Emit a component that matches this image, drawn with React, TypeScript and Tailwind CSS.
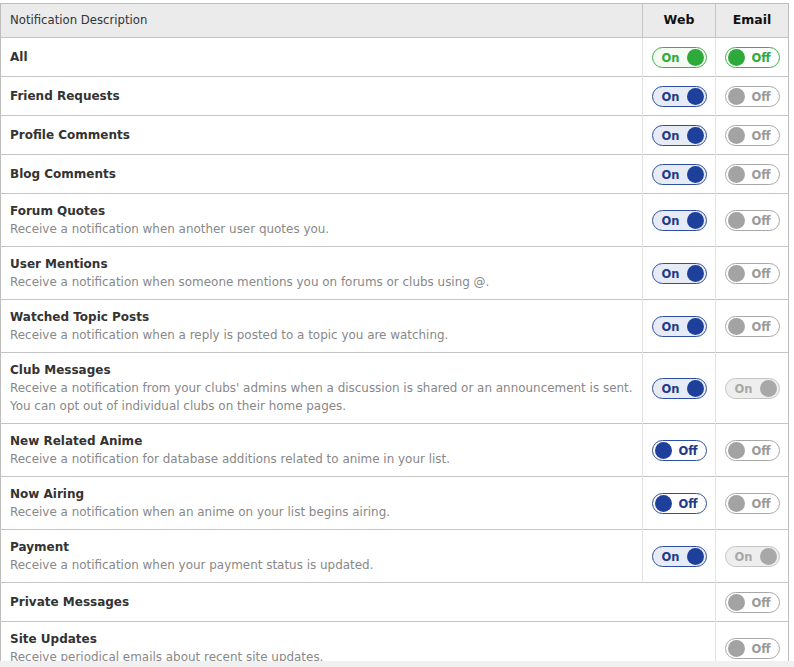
import React from 'react'

type Mode = 'green-on' | 'green-off' | 'blue-on' | 'blue-off' | 'gray-off' | 'gray-on'

interface Row {
  title: string
  desc?: string[]
  web?: Mode
  email: Mode
}

const rows: Row[] = [
  { title: 'All', web: 'green-on', email: 'green-off' },
  { title: 'Friend Requests', web: 'blue-on', email: 'gray-off' },
  { title: 'Profile Comments', web: 'blue-on', email: 'gray-off' },
  { title: 'Blog Comments', web: 'blue-on', email: 'gray-off' },
  { title: 'Forum Quotes', desc: ['Receive a notification when another user quotes you.'], web: 'blue-on', email: 'gray-off' },
  { title: 'User Mentions', desc: ['Receive a notification when someone mentions you on forums or clubs using @.'], web: 'blue-on', email: 'gray-off' },
  { title: 'Watched Topic Posts', desc: ['Receive a notification when a reply is posted to a topic you are watching.'], web: 'blue-on', email: 'gray-off' },
  {
    title: 'Club Messages',
    desc: [
      "Receive a notification from your clubs' admins when a discussion is shared or an announcement is sent.",
      'You can opt out of individual clubs on their home pages.',
    ],
    web: 'blue-on',
    email: 'gray-on',
  },
  { title: 'New Related Anime', desc: ['Receive a notification for database additions related to anime in your list.'], web: 'blue-off', email: 'gray-off' },
  { title: 'Now Airing', desc: ['Receive a notification when an anime on your list begins airing.'], web: 'blue-off', email: 'gray-off' },
  { title: 'Payment', desc: ['Receive a notification when your payment status is updated.'], web: 'blue-on', email: 'gray-on' },
  { title: 'Private Messages', email: 'gray-off' },
  { title: 'Site Updates', desc: ['Receive periodical emails about recent site updates.'], email: 'gray-off' },
]

const styles: Record<Mode, { box: string; knob: string; text: string; on: boolean }> = {
  'green-on': { box: 'border-[#3fae49] bg-[#f3fbf3]', knob: 'bg-[#2eaa3a]', text: 'text-[#2eaa3a]', on: true },
  'green-off': { box: 'border-[#3fae49] bg-white', knob: 'bg-[#2eaa3a]', text: 'text-[#2eaa3a]', on: false },
  'blue-on': { box: 'border-[#2e4e9e] bg-[#e6ebf6]', knob: 'bg-[#1f409a]', text: 'text-[#1f3b88]', on: true },
  'blue-off': { box: 'border-[#2e4e9e] bg-white', knob: 'bg-[#1f409a]', text: 'text-[#1f3b88]', on: false },
  'gray-off': { box: 'border-[#a8a8a8] bg-white', knob: 'bg-[#a3a3a3]', text: 'text-[#9a9a9a]', on: false },
  'gray-on': { box: 'border-[#c4c4c4] bg-[#eeeeee]', knob: 'bg-[#a8a8a8]', text: 'text-[#a8a8a8]', on: true },
}

function Toggle({ mode }: { mode: Mode }) {
  const s = styles[mode]
  return (
    <div className={`mx-auto flex h-[21px] w-[55px] items-center rounded-full border ${s.box} ${s.on ? 'pl-[9px] pr-[2px]' : 'pl-[2px] pr-[8px]'}`}>
      {s.on ? (
        <>
          <span className={`flex-1 translate-y-[1px] text-[11.5px] font-bold leading-[14px] ${s.text}`}>On</span>
          <span className={`h-[17px] w-[17px] rounded-full ${s.knob}`} />
        </>
      ) : (
        <>
          <span className={`h-[17px] w-[17px] rounded-full ${s.knob}`} />
          <span className={`flex-1 translate-y-[1px] text-right text-[11.5px] font-bold leading-[14px] ${s.text}`}>Off</span>
        </>
      )}
    </div>
  )
}

export default function App() {
  return (
    <div className="flex h-[667px] w-[794px] flex-col overflow-hidden bg-white" style={{ fontFamily: '"DejaVu Sans", Verdana, sans-serif' }}>
      <div className="h-[661px] overflow-hidden pt-[3px]">
        <table className="w-[789px] border-collapse border border-[#bdbdbd] text-[12px]">
          <thead>
            <tr className="h-[34px] bg-[#ebebeb]">
              <th className="border-r border-b border-[#c4c4c4] pl-[9px] text-left text-[11.7px] font-normal text-[#333]">Notification Description</th>
              <th className="w-[73px] border-r border-b border-[#c4c4c4] text-center text-[12.5px] font-bold text-[#111]">Web</th>
              <th className="w-[73px] border-b border-[#c4c4c4] text-center text-[12.5px] font-bold text-[#111]">Email</th>
            </tr>
          </thead>
          <tbody>
            {rows.map((r) => (
              <tr key={r.title} className="border-b border-[#c4c4c4]">
                <td colSpan={r.web ? 1 : 2} className="border-r border-[#e3e3e3] py-[8px] pl-[9px] align-middle">
                  <div className="text-[12px] font-bold leading-[18px] text-[#333]">{r.title}</div>
                  {r.desc?.map((d) => (
                    <div key={d} className="text-[11.95px] leading-[18px] text-[#888]">{d}</div>
                  ))}
                </td>
                {r.web && (
                  <td className="h-[39px] border-r border-[#e3e3e3] align-middle">
                    <Toggle mode={r.web} />
                  </td>
                )}
                <td className="h-[39px] align-middle">
                  <Toggle mode={r.email} />
                </td>
              </tr>
            ))}
          </tbody>
        </table>
      </div>
      <div className="h-[6px] bg-[#f0f0f0]" />
    </div>
  )
}
